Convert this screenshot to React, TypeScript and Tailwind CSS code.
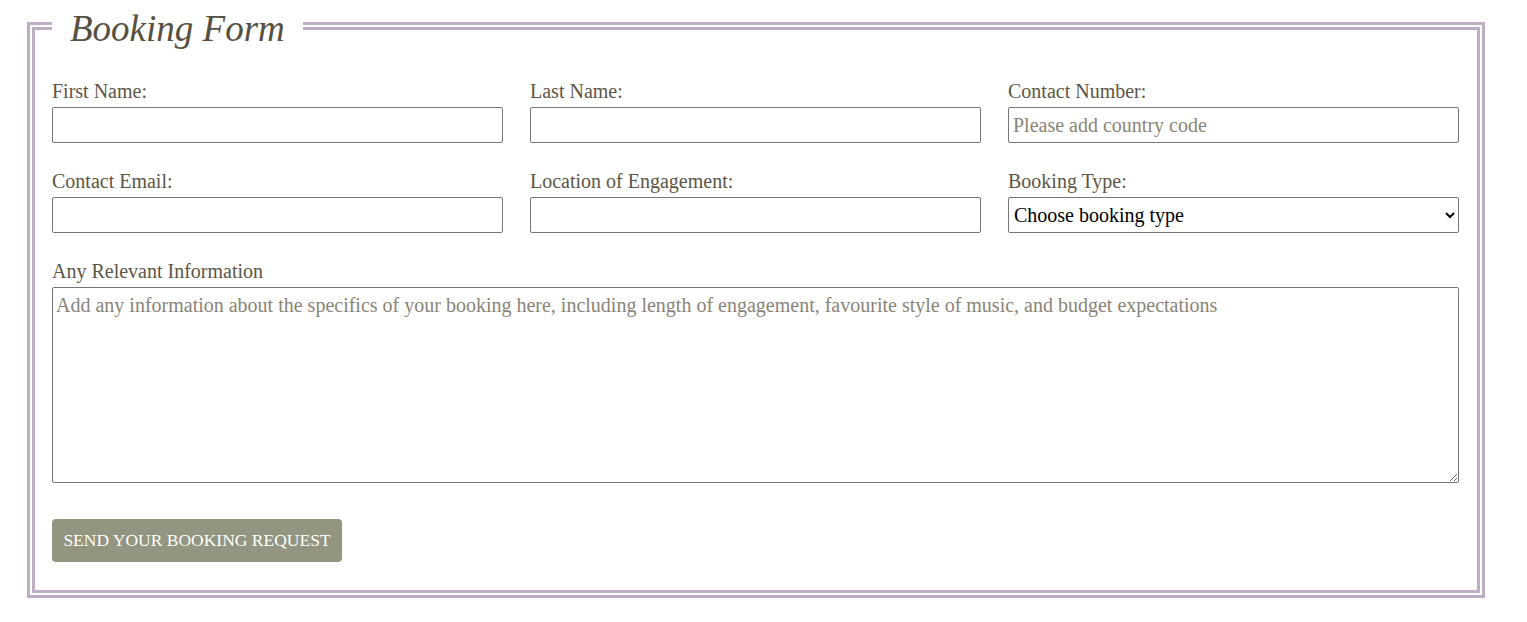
import React from 'react'

const SERIF = "font-['Liberation_Serif','Times_New_Roman',serif]"

function Field({ label, placeholder }: { label: string; placeholder?: string }) {
  return (
    <div className="flex flex-col">
      <label className="mb-[4px] text-[20px] leading-[24px] text-[#5c5646]">{label}</label>
      <input
        type="text"
        placeholder={placeholder}
        className="h-[36px] rounded-[2px] border border-[#767676] bg-white px-[4px] text-[20px] text-black outline-none placeholder:text-[#8a8478]"
      />
    </div>
  )
}

export default function App() {
  return (
    <div className={`${SERIF} min-h-screen bg-white px-[27px]`}>
      <fieldset className="w-[1458px] border-[8px] border-double border-[#bdaec6] pb-[28px] pl-[17px] pr-[18px] pt-[27px]">
        <legend className="ml-0 px-[18px] pt-[6px] text-[37px] italic leading-[46px] text-[#555041]">
          Booking Form
        </legend>

        <div className="grid grid-cols-3 gap-x-[27px] gap-y-[26px]">
          <Field label="First Name:" />
          <Field label="Last Name:" />
          <Field label="Contact Number:" placeholder="Please add country code" />
          <Field label="Contact Email:" />
          <Field label="Location of Engagement:" />
          <div className="flex flex-col">
            <label className="mb-[4px] text-[20px] leading-[24px] text-[#5c5646]">Booking Type:</label>
            <select className="h-[36px] rounded-[2px] border border-[#767676] bg-white px-[1px] text-[20px] text-black outline-none">
              <option>Choose booking type</option>
              <option>Wedding</option>
              <option>Private Party</option>
              <option>Corporate Event</option>
            </select>
          </div>
        </div>

        <div className="mt-[26px] flex flex-col">
          <label className="mb-[4px] text-[20px] leading-[24px] text-[#5c5646]">Any Relevant Information</label>
          <textarea
            placeholder="Add any information about the specifics of your booking here, including length of engagement, favourite style of music, and budget expectations"
            className="h-[196px] rounded-[2px] border border-[#767676] bg-white px-[3px] py-[2px] text-[20px] text-black outline-none placeholder:text-[#8a8478]"
          />
        </div>

        <button
          type="button"
          className="mt-[36px] h-[43px] w-[290px] rounded-[4px] bg-[#939580] text-[17.5px] uppercase text-white"
        >
          Send your booking request
        </button>
      </fieldset>
    </div>
  )
}
